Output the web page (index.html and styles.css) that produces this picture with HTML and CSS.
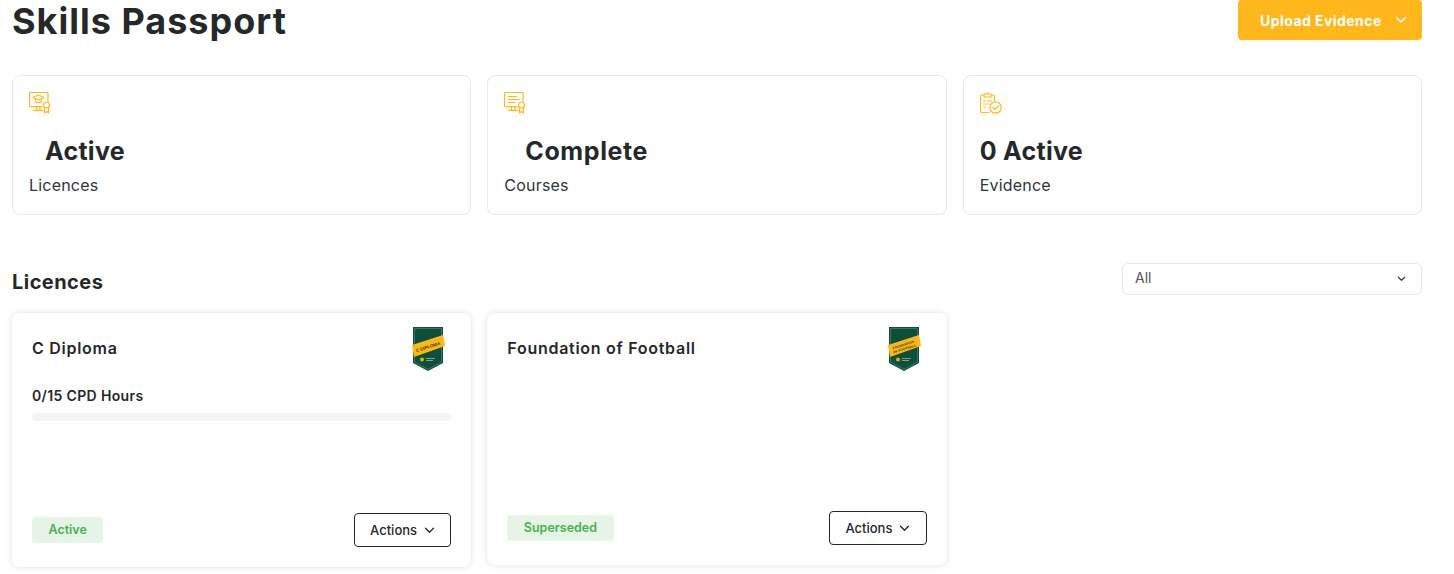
FILE: index.html
```html
<!DOCTYPE html>
<html lang="en">
<head>
<meta charset="utf-8">
<title>Skills Passport</title>
<link rel="stylesheet" href="styles.css">
</head>
<body>
<main class="page">
  <header class="page-head">
    <h1 class="page-title">Skills Passport</h1>
    <button class="upload-btn" type="button">
      <span>Upload Evidence</span>
      <svg class="chev-upload" viewBox="0 0 12 8" aria-hidden="true"><path d="M1.5 1.5 6 6l4.500-4.500"/></svg>
    </button>
  </header>

  <section class="stats">
    <article class="stat">
      <svg class="stat-icon" viewBox="0 0 22 22" aria-hidden="true">
        <path d="M13 14.700H1.500a1 1 0 0 1-1-1V1.500a1 1 0 0 1 1-1h16.500a1 1 0 0 1 1 1V9"/>
        <path d="M7.500 14.700v3.500M11 14.700v3.500M4.500 18.400h9.500"/>
        <path d="M4 5.500 9.500 3 15 5.500 9.500 8z"/>
        <path d="M6.500 7v2.500c1.500 1.500 4.500 1.500 6 0V7"/>
        <circle cx="17.500" cy="13" r="3"/>
        <path d="M15.500 15.500V21l2-1.500 2 1.500v-5.500"/>
      </svg>
      <p class="stat-value stat-value-licences">Active</p>
      <p class="stat-label">Licences</p>
    </article>
    <article class="stat">
      <svg class="stat-icon" viewBox="0 0 22 22" aria-hidden="true">
        <path d="M13 14.700H1.500a1 1 0 0 1-1-1V1.500a1 1 0 0 1 1-1h16.500a1 1 0 0 1 1 1V9"/>
        <path d="M7.500 14.700v3.500M11 14.700v3.500M4.500 18.400h9.500"/>
        <path d="M4 4.500h9M4 7.500h11M4 10.500h7"/>
        <circle cx="17.500" cy="13" r="3"/>
        <path d="M15.500 15.500V21l2-1.500 2 1.500v-5.500"/>
      </svg>
      <p class="stat-value stat-value-courses">Complete</p>
      <p class="stat-label">Courses</p>
    </article>
    <article class="stat">
      <svg class="stat-icon" viewBox="0 0 22 22" aria-hidden="true">
        <path d="M9 20.500H2a1.500 1.500 0 0 1-1.500-1.500V4.500A1.500 1.500 0 0 1 2 3h2M11 3h2a1.500 1.500 0 0 1 1.500 1.500V9"/>
        <path d="M4 2h2.300a1.300 1.300 0 0 1 2.400 0H11v3H4z"/>
        <path d="M3.500 9h2M3.500 12h2M3.500 15h2M7.500 9h4M7.500 12h1.500"/>
        <circle cx="15.500" cy="15.500" r="5.700"/>
        <path d="m12.800 15.500 2 2 3.500-3.500"/>
      </svg>
      <p class="stat-value">0 Active</p>
      <p class="stat-label">Evidence</p>
    </article>
  </section>

  <section class="licences">
    <div class="licences-head">
      <h2 class="licences-title">Licences</h2>
      <div class="filter">
        <span class="filter-text">All</span>
        <svg class="chev-filter" viewBox="0 0 10 6" aria-hidden="true"><path d="M1.500 1 5 4.500 8.500 1"/></svg>
      </div>
    </div>
    <div class="cards">
      <article class="card card-tall">
        <div class="card-top">
          <h3 class="card-title">C Diploma</h3>
          <svg class="badge" viewBox="0 0 34 46" aria-hidden="true">
            <path class="badge-edge" d="M2 1h30v36L17 45 2 37z"/>
            <path class="badge-line" d="M3.500 2.500h27v33.500L17 43.300 3.500 36z"/>
            <path class="badge-ribbon" d="M1 19 32 9l2 11-31 11z"/>
            <text class="badge-label" transform="rotate(-18 17 21)" x="17" y="22.500" text-anchor="middle">C DIPLOMA</text>
            <circle class="badge-logo" cx="11" cy="33.500" r="2"/>
            <path class="badge-small" d="M15 32.500h9M15 34.500h7"/>
          </svg>
        </div>
        <p class="cpd">0/15 CPD Hours</p>
        <div class="progress"></div>
        <div class="card-foot">
          <span class="status">Active</span>
          <button class="actions" type="button">
            <span>Actions</span>
            <svg class="chev-actions" viewBox="0 0 12 8" aria-hidden="true"><path d="M1.500 1.500 6 6l4.500-4.500"/></svg>
          </button>
        </div>
      </article>
      <article class="card">
        <div class="card-top">
          <h3 class="card-title">Foundation of Football</h3>
          <svg class="badge" viewBox="0 0 34 46" aria-hidden="true">
            <path class="badge-edge" d="M2 1h30v36L17 45 2 37z"/>
            <path class="badge-line" d="M3.500 2.500h27v33.500L17 43.300 3.500 36z"/>
            <path class="badge-ribbon" d="M1 19 32 9l2 11-31 11z"/>
            <text class="badge-label badge-label-small" transform="rotate(-18 17 21)" x="17" y="20" text-anchor="middle">FOUNDATION</text>
            <text class="badge-label badge-label-small" transform="rotate(-18 17 21)" x="17" y="24" text-anchor="middle">OF FOOTBALL</text>
            <circle class="badge-logo" cx="11" cy="33.500" r="2"/>
            <path class="badge-small" d="M15 32.500h9M15 34.500h7"/>
          </svg>
        </div>
        <div class="card-foot">
          <span class="status">Superseded</span>
          <button class="actions" type="button">
            <span>Actions</span>
            <svg class="chev-actions" viewBox="0 0 12 8" aria-hidden="true"><path d="M1.500 1.500 6 6l4.500-4.500"/></svg>
          </button>
        </div>
      </article>
    </div>
  </section>
</main>
</body>
</html>
```
FILE: styles.css
```css
* { box-sizing: border-box; }
html, body { margin: 0; background: #fff; }
body {
  font-family: Inter, "Noto Sans", "Liberation Sans", sans-serif;
  color: #25282b;
  height: 574px;
  overflow: hidden;
}
p, h1, h2, h3 { margin: 0; }
button { font-family: inherit; }

.page { padding: 0 32px 0 12px; }

.page-head {
  display: flex;
  justify-content: space-between;
  align-items: center;
  height: 40px;
}
.page-title { padding-top: 2px; font-size: 36px; line-height: 40px; font-weight: 700; letter-spacing: 1px; }
.upload-btn {
  width: 184px;
  height: 40px;
  display: flex;
  align-items: center;
  justify-content: space-between;
  padding: 0 15px 0 22px;
  background: #ffb71b;
  color: #fff;
  border: 0;
  border-radius: 4px;
  font-size: 14px;
  font-weight: 700;
  letter-spacing: .45px;
}
.chev-upload { width: 12px; height: 8px; }
.chev-upload path, .chev-actions path, .chev-filter path { fill: none; stroke-width: 1.5; stroke-linecap: round; stroke-linejoin: round; }
.chev-upload path { stroke: #fff; }

.stats {
  display: grid;
  grid-template-columns: repeat(3, 1fr);
  gap: 16px;
  margin-top: 35px;
}
.stat {
  height: 140px;
  padding: 16px;
  border: 1px solid #e5e7eb;
  border-radius: 8px;
}
.stat-icon {
  display: block;
  width: 22px;
  height: 22px;
  fill: none;
  stroke: #ffb71b;
  stroke-width: 1.2;
  stroke-linecap: round;
  stroke-linejoin: round;
}
.stat-value { margin-top: 19px; font-size: 25px; line-height: 36px; font-weight: 700; letter-spacing: .3px; }
.stat-value-licences { padding-left: 16px; }
.stat-value-courses { padding-left: 21px; letter-spacing: .6px; }
.stat-label { margin-top: 4px; font-size: 16px; line-height: 24px; color: #30353a; letter-spacing: .2px; }

.licences { margin-top: 48px; }
.licences-head {
  display: flex;
  justify-content: space-between;
  align-items: center;
  height: 32px;
}
.licences-title { padding-top: 6px; font-size: 20px; line-height: 28px; font-weight: 700; letter-spacing: .45px; }
.filter {
  width: 300px;
  height: 32px;
  display: flex;
  align-items: center;
  justify-content: space-between;
  padding: 0 15px 0 12px;
  border: 1px solid #e5e7eb;
  border-radius: 6px;
  font-size: 14px;
  color: #555;
}
.filter-text { padding-bottom: 3px; }
.chev-filter { width: 9px; height: 6px; }
.chev-filter path { stroke: #444; }

.cards {
  display: grid;
  grid-template-columns: repeat(3, 1fr);
  column-gap: 16px;
  align-items: start;
  margin-top: 18px;
}
.card {
  height: 252px;
  padding: 13px 20px 20px;
  display: flex;
  flex-direction: column;
  border-radius: 8px;
  box-shadow: 0 0 6px rgba(0, 0, 0, .13);
}
.card-tall { height: 254px; }
.card-top { display: flex; justify-content: space-between; align-items: flex-start; }
.card-title { margin-top: 10px; font-size: 16px; line-height: 24px; font-weight: 600; letter-spacing: .72px; }
.badge { width: 34px; height: 46px; flex: none; margin-right: 6px; }
.badge-edge { fill: #0f4f3a; }
.badge-line { fill: none; stroke: #5d8a76; stroke-width: .6; }
.badge-ribbon { fill: #fdb71a; }
.badge-label { font-family: "Liberation Sans", sans-serif; font-size: 4.5px; font-weight: 700; fill: #3d3a20; }
.badge-label-small { font-size: 3.4px; }
.badge-logo { fill: #c9b52a; }
.badge-small { stroke: #7fa37e; stroke-width: 1; fill: none; }

.cpd { margin-top: 14px; font-size: 14px; line-height: 20px; font-weight: 600; letter-spacing: .35px; }
.progress { height: 8px; margin-top: 7px; background: #f3f4f6; border-radius: 4px; }

.card-foot {
  margin-top: auto;
  display: flex;
  justify-content: space-between;
  align-items: center;
}
.status {
  display: block;
  padding: 0 16.5px;
  height: 26px;
  line-height: 26px;
  background: #e6f4e7;
  color: #4caf50;
  border-radius: 4px;
  font-size: 12.5px;
  font-weight: 600;
}
.actions {
  width: 97.5px;
  height: 34px;
  display: flex;
  align-items: center;
  justify-content: center;
  gap: 7px;
  background: #fff;
  color: #25282b;
  border: 1px solid #25282b;
  border-radius: 4px;
  font-size: 13px;
  font-weight: 500;
  padding: 0;
}
.chev-actions { width: 11px; height: 7px; }
.chev-actions path { stroke: #25282b; }
```
